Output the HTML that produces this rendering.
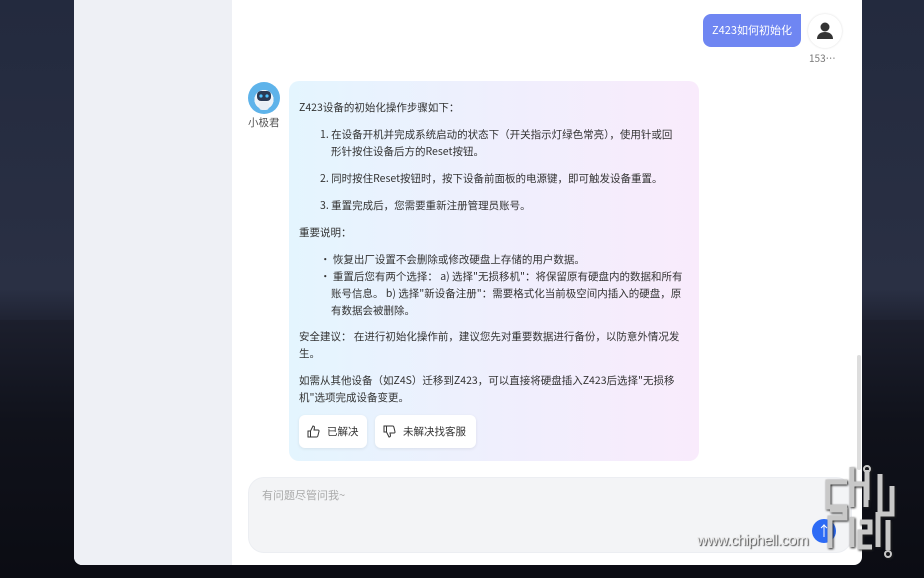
<!DOCTYPE html>
<html><head><meta charset="utf-8"><style>
*{margin:0;padding:0;box-sizing:border-box}
body{width:924px;height:578px;overflow:hidden;position:relative;font-family:"Noto Sans CJK SC",sans-serif;
background:linear-gradient(180deg,#232a3e 0%,#2a3044 50%,#161824 60%,#0d0f17 100%);}
.dune{position:absolute;left:0;top:320px;width:924px;height:258px;background:linear-gradient(180deg,#1c1f2d,#10121b 40%,#0b0c13);}
.panel{position:absolute;left:74px;top:0;width:788px;height:565px;background:#fff;border-radius:0 0 8px 8px;overflow:hidden}
.side{position:absolute;left:0;top:0;width:158px;height:565px;background:#eef0f5}
.ub{position:absolute;left:629px;top:14px;width:98px;height:33px;background:#6f86f2;border-radius:8px 0 8px 8px;color:#fff;font-size:11px;line-height:33px;text-align:center}
.ua{position:absolute;left:734px;top:14px;width:34px;height:34px;border-radius:50%;background:#fff;box-shadow:0 0 2px rgba(0,0,0,.15)}
.un{position:absolute;left:735px;top:50px;font-size:10px;color:#777}
.ba{position:absolute;left:174px;top:82px;width:32px;height:32px;border-radius:50%;background:radial-gradient(circle at 50% 55%,#eef3f8 0 40%,#5eb3ea 41%)}
.bn{position:absolute;left:174px;top:115px;font-size:10.5px;color:#555}
.bb{position:absolute;left:215px;top:81px;width:410px;height:380px;border-radius:10px;background:linear-gradient(90deg,#e4f5fe,#efeffd 50%,#f9ebfc);color:#333;font-size:10.5px;line-height:17px;padding:0 10px}
.bb p{position:absolute;left:10px;white-space:nowrap}
.btn{position:absolute;top:334px;height:33px;background:#fff;border-radius:6px;box-shadow:0 1px 3px rgba(0,0,0,.08);font-size:10.5px;line-height:33px;color:#333;padding-left:28px}
.inp{position:absolute;left:174px;top:477px;width:604px;height:76px;border-radius:16px;background:#f3f4f6;border:1px solid #eceef2;font-size:11px;color:#aaa;padding:9px 13px}
.send{position:absolute;left:738px;top:519px;width:24px;height:24px;border-radius:50%;background:#2d6bf5;color:#fff;font-size:14px;text-align:center;line-height:24px}
.sb{position:absolute;left:783px;top:355px;width:4px;height:115px;background:#ddd;border-radius:2px}
.wm{position:absolute;left:697px;top:532px;font-family:"Liberation Sans",sans-serif;font-size:15px;color:#eee;text-shadow:1px 1px 1px #444;letter-spacing:-.5px}
</style></head><body>
<div class="dune"></div>
<div class="panel">
<div class="side"></div>
<div class="ub">Z423如何初始化</div>
<div class="ua"><svg width="34" height="34" viewBox="0 0 34 34"><circle cx="17" cy="13" r="4.5" fill="#333"/><path d="M9 25c0-5 4-7 8-7s8 2 8 7z" fill="#333"/></svg></div>
<div class="un">153…</div>
<div class="ba"><svg width="32" height="32" viewBox="0 0 32 32"><rect x="9" y="9" width="14" height="10" rx="4" fill="#2b3a55"/><circle cx="13" cy="14" r="1.6" fill="#4fc3ff"/><circle cx="19" cy="14" r="1.6" fill="#4fc3ff"/><rect x="11" y="20" width="10" height="8" rx="3" fill="#e8eef5"/></svg></div>
<div class="bn">小极君</div>
<div class="bb">
<p style="top:18px">Z423设备的初始化操作步骤如下：</p>
<p style="top:45px;left:31px">1. 在设备开机并完成系统启动的状态下（开关指示灯绿色常亮），使用针或回</p>
<p style="top:62px;left:42px">形针按住设备后方的Reset按钮。</p>
<p style="top:89px;left:31px">2. 同时按住Reset按钮时，按下设备前面板的电源键，即可触发设备重置。</p>
<p style="top:116px;left:31px">3. 重置完成后，您需要重新注册管理员账号。</p>
<p style="top:143px">重要说明：</p>
<p style="top:170px;left:31px">• 恢复出厂设置不会删除或修改硬盘上存储的用户数据。</p>
<p style="top:187px;left:31px">• 重置后您有两个选择： a) 选择"无损移机"：将保留原有硬盘内的数据和所有</p>
<p style="top:204px;left:42px">账号信息。 b) 选择"新设备注册"：需要格式化当前极空间内插入的硬盘，原</p>
<p style="top:221px;left:42px">有数据会被删除。</p>
<p style="top:247px">安全建议： 在进行初始化操作前，建议您先对重要数据进行备份，以防意外情况发</p>
<p style="top:264px">生。</p>
<p style="top:291px">如需从其他设备（如Z4S）迁移到Z423，可以直接将硬盘插入Z423后选择"无损移</p>
<p style="top:308px">机"选项完成设备变更。</p>
<div class="btn" style="left:10px;width:68px"><svg style="position:absolute;left:8px;top:10px" width="13" height="13" viewBox="0 0 13 13" fill="none" stroke="#333" stroke-width="1"><path d="M1 6h2.5v6H1zM3.5 6l2.5-5c1.2 0 1.6.8 1.4 2L7 5h4c.8 0 1.2.6 1 1.3l-1.2 4.8c-.2.6-.6.9-1.2.9H3.5"/></svg>已解决</div>
<div class="btn" style="left:86px;width:101px"><svg style="position:absolute;left:8px;top:10px" width="13" height="13" viewBox="0 0 13 13" fill="none" stroke="#333" stroke-width="1"><path d="M1 1h2.5v6H1zM3.5 7l2.5 5c1.2 0 1.6-.8 1.4-2L7 8h4c.8 0 1.2-.6 1-1.3L10.8 1.9C10.6 1.3 10.2 1 9.6 1H3.5"/></svg>未解决找客服</div>
</div>
<div class="sb"></div>
<div class="inp">有问题尽管问我~</div>
<div class="send">↑</div>
</div>
<div class="wm">www.chiphell.com</div>
<svg style="position:absolute;left:822px;top:462px" width="90" height="100" viewBox="0 0 90 100" fill="none" stroke="#c8c8c8" stroke-width="5" filter="drop-shadow(1px 1px 1px #222)">
<path d="M25 20H6v25h19M30 5v40M30 22h14v23M45 8v30M58 12v40h12v-28"/>
<circle cx="45" cy="7" r="3" stroke-width="2"/>
<path d="M8 48h15v8H8v30M30 55v30M38 60h10v10H38v15h12M56 50v35M66 58v30"/>
<circle cx="66" cy="92" r="3" stroke-width="2"/>
</svg>
</body></html>
